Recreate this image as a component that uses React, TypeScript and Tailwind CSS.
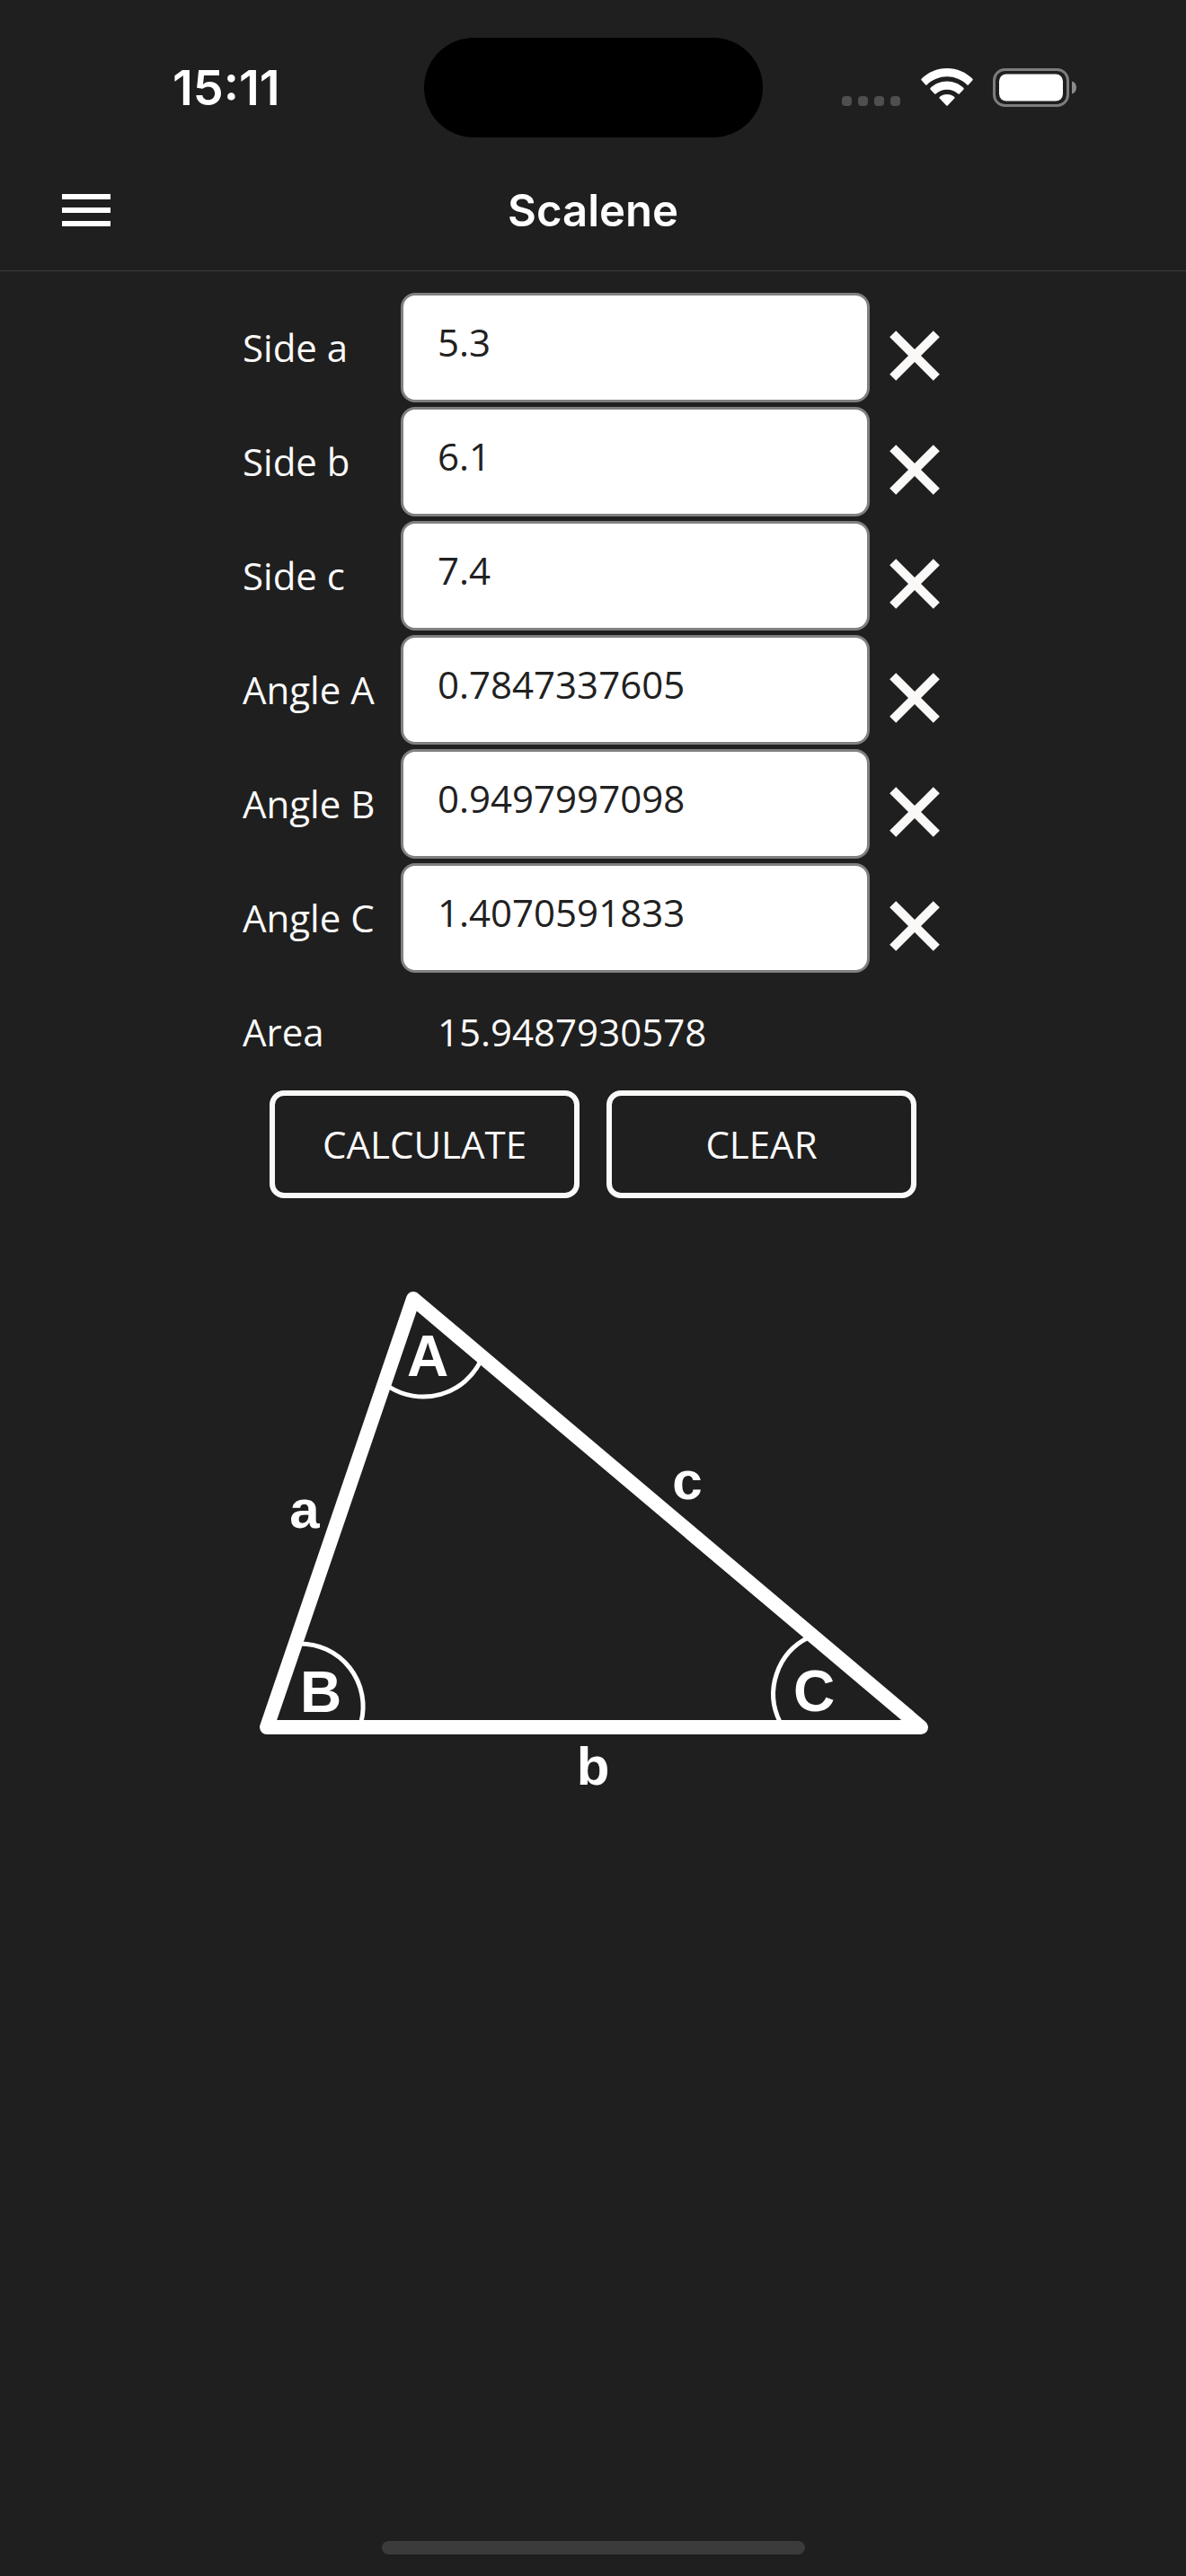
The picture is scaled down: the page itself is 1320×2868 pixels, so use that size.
import React, { useState } from 'react';

const fields = [
  { id: 'a', label: 'Side a' },
  { id: 'b', label: 'Side b' },
  { id: 'c', label: 'Side c' },
  { id: 'A', label: 'Angle A' },
  { id: 'B', label: 'Angle B' },
  { id: 'C', label: 'Angle C' }
];

const initialValues: Record<string, string> = {
  a: '5.3',
  b: '6.1',
  c: '7.4',
  A: '0.7847337605',
  B: '0.9497997098',
  C: '1.4070591833'
};

const StatusBar: React.FC = () => (
  <div className="grid grid-cols-[1fr_377px_1fr] items-center px-8 pt-[42px]">
    <div className="text-center font-['Inter',sans-serif] text-[54px] leading-none font-semibold">15:11</div>
    <div className="h-[111px] rounded-full bg-black" />
    <div className="flex items-center justify-center">
      <svg width="66" height="44" viewBox="0 0 66 44" fill="#4f4f4f">
        <rect x="0" y="31" width="11" height="11" rx="4" />
        <rect x="18" y="31" width="11" height="11" rx="4" />
        <rect x="36" y="31" width="11" height="11" rx="4" />
        <rect x="54" y="31" width="11" height="11" rx="4" />
      </svg>
      <svg className="ml-[22px]" width="58" height="44" viewBox="0 0 58 44" fill="#fff">
        <path d="M29 0C18 0 7.800 4.500 0.500 11.800Q0 12.500 0.500 13.200L5.200 18.400Q5.900 19 6.600 18.400C12.600 12.700 20.500 9.300 29 9.300S45.400 12.700 51.400 18.400Q52.100 19 52.800 18.400L57.500 13.200Q58 12.500 57.500 11.800C50.200 4.500 40 0 29 0Z" />
        <path d="M29 14.500C21.800 14.500 15.300 17.400 10.500 22Q10 22.700 10.500 23.400L15.200 28.600Q15.900 29.100 16.600 28.600C19.900 25.500 24.200 23.700 29 23.700S38.100 25.500 41.400 28.600Q42.100 29.100 42.800 28.600L47.500 23.400Q48 22.700 47.500 22C42.700 17.400 36.200 14.500 29 14.500Z" />
        <path d="M29 29C25.800 29 22.900 30.200 20.700 32.100Q20.100 32.800 20.700 33.500L28.300 41.500Q29 42.100 29.700 41.500L37.300 33.500Q37.900 32.800 37.300 32.100C35.100 30.200 32.200 29 29 29Z" />
      </svg>
      <svg className="ml-[22px]" width="94" height="44" viewBox="0 0 94 44">
        <rect x="1.500" y="1.500" width="82" height="40" rx="12" fill="none" stroke="#7d7d7d" strokeWidth="3" />
        <rect x="7" y="6.500" width="71" height="30" rx="8" fill="#fff" />
        <path d="M88 14.500C91.500 15.500 93 18.500 93 21.500S91.500 27.500 88 28.500Z" fill="#8a8a8a" />
      </svg>
    </div>
  </div>
);

const NavBar: React.FC = () => (
  <header className="grid h-[149px] grid-cols-[1fr_auto_1fr] items-center border-b border-[#3d3d3d] px-[69px] pt-3.5">
    <button type="button" aria-label="Menu" className="w-fit">
      <svg width="54" height="36" viewBox="0 0 54 36" fill="#fff">
        <rect y="0" width="54" height="6" />
        <rect y="15" width="54" height="6" />
        <rect y="30" width="54" height="6" />
      </svg>
    </button>
    <h1 className="font-['Inter',sans-serif] text-[49px] leading-none font-semibold">Scalene</h1>
  </header>
);

const Triangle: React.FC = () => (
  <svg
    className="mt-[86px] w-full"
    viewBox="270 1420 780 580"
    role="img"
    aria-label="Scalene triangle"
    fill="none"
    stroke="#fff"
  >
    <path d="M460 1446L1025 1923H297Z" strokeWidth="16" strokeLinejoin="round" />
    <path d="M433 1544A71 71 0 0 0 535 1515" strokeWidth="5" />
    <path d="M334 1830A70 70 0 0 1 402 1917" strokeWidth="5" />
    <path d="M900 1823A70 70 0 0 0 868 1917" strokeWidth="5" />
    <g
      fill="#fff"
      stroke="none"
      textAnchor="middle"
      className="font-['Liberation_Sans',sans-serif] font-bold"
    >
      <g className="text-[64px]">
        <text x="476" y="1532">A</text>
        <text x="357" y="1906">B</text>
        <text x="906" y="1905">C</text>
      </g>
      <g className="text-[60px]">
        <text x="339" y="1701">a</text>
        <text x="765" y="1669">c</text>
        <text x="660" y="1987">b</text>
      </g>
    </g>
  </svg>
);

const App: React.FC = () => {
  const [values, setValues] = useState(initialValues);
  const [area, setArea] = useState('15.9487930578');

  const setValue = (id: string, value: string) => setValues({ ...values, [id]: value });

  const calculate = () => {
    const a = Number(values.a);
    const b = Number(values.b);
    const c = Number(values.c);
    const s = (a + b + c) / 2;
    const square = s * (s - a) * (s - b) * (s - c);
    if (!(square > 0)) return;
    setValues({
      ...values,
      A: Math.acos((b * b + c * c - a * a) / (2 * b * c)).toFixed(10),
      B: Math.acos((a * a + c * c - b * b) / (2 * a * c)).toFixed(10),
      C: Math.acos((a * a + b * b - c * c) / (2 * a * b)).toFixed(10)
    });
    setArea(Math.sqrt(square).toFixed(10));
  };

  const clear = () => {
    setValues({ a: '', b: '', c: '', A: '', B: '', C: '' });
    setArea('');
  };

  return (
    <div className="flex min-h-screen flex-col bg-[#1f1f1f] text-white">
      <StatusBar />
      <NavBar />

      <main className="mx-auto w-full max-w-[780px] pt-6 font-['Open_Sans',sans-serif] text-[42px] text-[#faf9f8]">
        <div className="flex flex-col gap-[5px]">
          {fields.map((f) => (
            <div key={f.id} className="flex h-[122px] items-center">
              <label htmlFor={f.id} className="w-[176px] shrink-0 pb-0.5">{f.label}</label>
              <input
                id={f.id}
                type="text"
                inputMode="decimal"
                value={values[f.id]}
                onChange={(e) => setValue(f.id, e.target.value)}
                className="h-full min-w-0 flex-1 rounded-2xl border-3 border-[#808080] bg-white px-[38px] pb-3.5 text-[#212121] outline-none"
              />
              <button
                type="button"
                aria-label={`Clear ${f.label}`}
                onClick={() => setValue(f.id, '')}
                className="ml-[18px] flex h-full w-16 shrink-0 items-center justify-center pt-[18px]"
              >
                <svg width="56" height="56" viewBox="0 0 56 56" stroke="#faf9f8" strokeWidth="10">
                  <path d="M3.700 3.700L52.300 52.300M52.300 3.700L3.700 52.300" />
                </svg>
              </button>
            </div>
          ))}
          <div className="flex h-[122px] items-center">
            <label htmlFor="area" className="w-[176px] shrink-0 pb-0.5">Area</label>
            <output id="area" className="pb-0.5 pl-[41px]">{area}</output>
          </div>
        </div>

        <div className="mt-1 flex gap-[30px] px-[30px]">
          <button
            type="button"
            onClick={calculate}
            className="h-[120px] flex-1 rounded-2xl border-6 border-[#faf9f8] pb-0.5"
          >
            CALCULATE
          </button>
          <button
            type="button"
            onClick={clear}
            className="h-[120px] flex-1 rounded-2xl border-6 border-[#faf9f8] pb-0.5"
          >
            CLEAR
          </button>
        </div>

        <Triangle />
      </main>

      <div className="mt-auto flex justify-center pb-6">
        <div className="h-[15px] w-[471px] rounded-full bg-[#3b3b3b]" />
      </div>
    </div>
  );
};

export default App;
